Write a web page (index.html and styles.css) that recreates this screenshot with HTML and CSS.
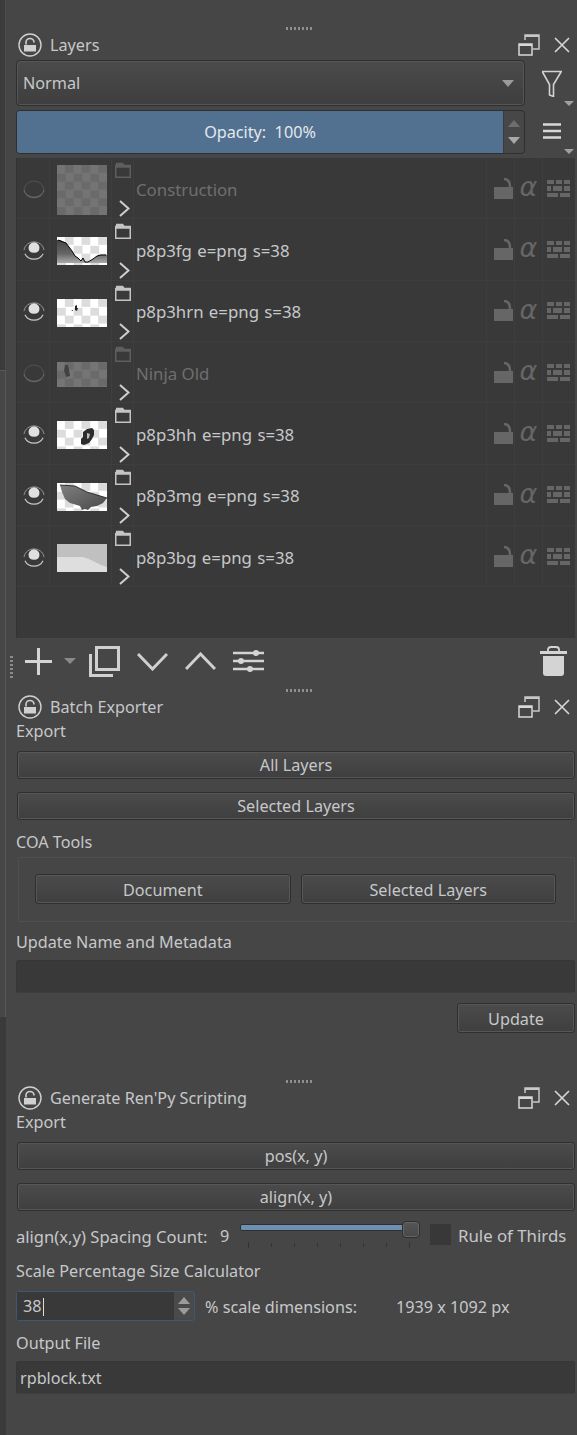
FILE: index.html
```html
<!DOCTYPE html>
<html lang="en">
<head>
    <meta charset="UTF-8">
    <title>Layers</title>
    <link rel="stylesheet" href="styles.css">
</head>
<body>
    <!-- shared icons -->
    <svg class="defs">
        <symbol id="i-dock-lock" viewBox="0 0 24 24">
            <circle cx="12" cy="12" r="11" fill="none" stroke="#d0d0d0" stroke-width="1.4"/>
            <rect x="6" y="12" width="12" height="6.5" fill="#d0d0d0"/>
            <path d="M8 11.5V9.5a4 4 0 0 1 8 0" fill="none" stroke="#d0d0d0" stroke-width="1.6"/>
        </symbol>
        <symbol id="i-float" viewBox="0 0 22 22">
            <path d="M7 6V1h14v14h-6" fill="none" stroke="#c8c8c8" stroke-width="1.5"/>
            <path d="M7 2h14" stroke="#c8c8c8" stroke-width="2"/>
            <rect x="1" y="10" width="13" height="11" fill="none" stroke="#d8d8d8" stroke-width="1.5"/>
            <path d="M1 11h13" stroke="#d8d8d8" stroke-width="2"/>
        </symbol>
        <symbol id="i-close" viewBox="0 0 16 16">
            <path d="M1 1l14 14M15 1L1 15" stroke="#d4d4d4" stroke-width="1.7"/>
        </symbol>
        <symbol id="i-eye" viewBox="0 0 24 22">
            <path d="M1 10C3-2 21-2 23 10" fill="none" stroke="#a0a0a0" stroke-width="1"/>
            <path d="M6 7.500a6 6 0 0 1 12 0q0 5.500-6 5.500t-6-5.500z" fill="#e0e0e0"/>
            <path d="M2 14c4 8 16 8 20 0" fill="none" stroke="#c8c8c8" stroke-width="1.300"/>
        </symbol>
        <symbol id="i-eye-off" viewBox="0 0 24 22">
            <path d="M1 11C3-2 21-2 23 11" fill="none" stroke="#565656" stroke-width="1"/>
            <path d="M1 11c2 11 20 11 22 0" fill="none" stroke="#666" stroke-width="1.400"/>
        </symbol>
        <symbol id="i-folder" viewBox="0 0 16 16">
            <path d="M.750 3.500h14.500v11.750H.750z" fill="none" stroke="currentColor" stroke-width="1.500"/>
            <path d="M1 .800h7l2 3h5v2H1z" fill="currentColor"/>
        </symbol>
        <symbol id="i-chevron" viewBox="0 0 11 17">
            <path d="M1 1l8.500 7.500L1 16" fill="none" stroke="#cfcfcf" stroke-width="2"/>
        </symbol>
        <symbol id="i-lock" viewBox="0 0 19 21">
            <rect x="0" y="9" width="19" height="12" fill="#666"/>
            <path d="M10 1c4 0 6 2 6 8" fill="none" stroke="#666" stroke-width="2.500"/>
        </symbol>
        <symbol id="i-bricks" viewBox="0 0 23 17">
            <path d="M0 0h7v4H0zM9 0h6v4H9zM17 0h6v4h-6zM0 6h4v5H0zM6 6h9v5H6zM17 6h6v5h-6zM0 13h11v4H0zM13 13h10v4H13z" fill="#666"/>
        </symbol>
    </svg>

    <div class="page">
        <div class="edge">
            <div class="edge-top"></div>
            <div class="edge-mid"></div>
        </div>

        <div class="docks">

            <!-- Layers -->
            <div class="handle handle-first"></div>
            <div class="dock-title">
                <svg class="title-lock"><use href="#i-dock-lock"/></svg>
                <span class="title-text">Layers</span>
                <svg class="title-float"><use href="#i-float"/></svg>
                <svg class="title-close"><use href="#i-close"/></svg>
            </div>

            <div class="tool-row combo-row">
                <div class="combo">
                    <span>Normal</span>
                    <i class="tri tri-down"></i>
                </div>
                <div class="tool-side">
                    <svg class="filter-icon" viewBox="0 0 22 27">
                        <path d="M1 1.500h20M1.500 2l7 12.500V25l4 1.500V14.500l7.500-12.500" fill="none" stroke="#d2d2d2" stroke-width="1.600"/>
                    </svg>
                    <i class="tri tri-small"></i>
                </div>
            </div>

            <div class="tool-row opacity-row">
                <div class="opacity">
                    <div class="opacity-fill">Opacity:&nbsp; 100%</div>
                    <div class="spin-arrows">
                        <i class="tri tri-up tri-dim"></i>
                        <i class="tri tri-down tri-bright"></i>
                    </div>
                </div>
                <div class="tool-side">
                    <svg class="menu-icon" viewBox="0 0 18 16">
                        <path d="M0 1.500h18M0 8h18M0 14.500h18" stroke="#d8d8d8" stroke-width="2.400"/>
                    </svg>
                    <i class="tri tri-small"></i>
                </div>
            </div>

            <div class="layer-list">
                <div class="layer layer-off">
                    <div class="cell"><svg class="eye"><use href="#i-eye-off"/></svg></div>
                    <div class="cell cell-thumb"><div class="thumb thumb-tall"></div></div>
                    <div class="cell cell-kind"><svg class="folder"><use href="#i-folder"/></svg><svg class="chevron"><use href="#i-chevron"/></svg></div>
                    <div class="cell cell-name">Construction</div>
                    <div class="cell"><svg class="lock"><use href="#i-lock"/></svg></div>
                    <div class="cell alpha">α</div>
                    <div class="cell cell-last"><svg class="bricks"><use href="#i-bricks"/></svg></div>
                </div>

                <div class="layer">
                    <div class="cell"><svg class="eye"><use href="#i-eye"/></svg></div>
                    <div class="cell cell-thumb">
                        <div class="thumb">
                            <svg class="thumb-art" viewBox="0 0 50 28">
                                <defs><linearGradient id="fg" x1="0" y1="0" x2="0" y2="1"><stop offset="0" stop-color="#444"/><stop offset=".6" stop-color="#666"/><stop offset="1" stop-color="#aaa"/></linearGradient></defs>
                                <path d="M0 3l3 0 6 3 6 8 3 5 3 2 3 3 2-3 2 4 3 0 5-3 4-3 4-1 6 0v8H0z" fill="url(#fg)"/>
                                <path d="M1 3l8 3 6 8 3 5 3 2 3 3 2-3 2 4 3 0 5-3 4-3 4-1 5 0" fill="none" stroke="#000" stroke-width="1"/>
                            </svg>
                        </div>
                    </div>
                    <div class="cell cell-kind"><svg class="folder"><use href="#i-folder"/></svg><svg class="chevron"><use href="#i-chevron"/></svg></div>
                    <div class="cell cell-name">p8p3fg e=png s=38</div>
                    <div class="cell"><svg class="lock"><use href="#i-lock"/></svg></div>
                    <div class="cell alpha">α</div>
                    <div class="cell cell-last"><svg class="bricks"><use href="#i-bricks"/></svg></div>
                </div>

                <div class="layer">
                    <div class="cell"><svg class="eye"><use href="#i-eye"/></svg></div>
                    <div class="cell cell-thumb">
                        <div class="thumb">
                            <svg class="thumb-art" viewBox="0 0 50 28">
                                <path d="M18 7l2-1 0 3 1 0-1 3-2-1zM14 12l2-1 0 1z" fill="#222"/>
                            </svg>
                        </div>
                    </div>
                    <div class="cell cell-kind"><svg class="folder"><use href="#i-folder"/></svg><svg class="chevron"><use href="#i-chevron"/></svg></div>
                    <div class="cell cell-name">p8p3hrn e=png s=38</div>
                    <div class="cell"><svg class="lock"><use href="#i-lock"/></svg></div>
                    <div class="cell alpha">α</div>
                    <div class="cell cell-last"><svg class="bricks"><use href="#i-bricks"/></svg></div>
                </div>

                <div class="layer layer-off">
                    <div class="cell"><svg class="eye"><use href="#i-eye-off"/></svg></div>
                    <div class="cell cell-thumb">
                        <div class="thumb thumb-short">
                            <svg class="thumb-art" viewBox="0 0 50 25">
                                <path d="M8 3h3l1 5 1 6-4 1-1-4-1-2z" fill="#555"/>
                            </svg>
                        </div>
                    </div>
                    <div class="cell cell-kind"><svg class="folder"><use href="#i-folder"/></svg><svg class="chevron"><use href="#i-chevron"/></svg></div>
                    <div class="cell cell-name">Ninja Old</div>
                    <div class="cell"><svg class="lock"><use href="#i-lock"/></svg></div>
                    <div class="cell alpha">α</div>
                    <div class="cell cell-last"><svg class="bricks"><use href="#i-bricks"/></svg></div>
                </div>

                <div class="layer">
                    <div class="cell"><svg class="eye"><use href="#i-eye"/></svg></div>
                    <div class="cell cell-thumb">
                        <div class="thumb">
                            <svg class="thumb-art" viewBox="0 0 50 28">
                                <path d="M26 11l4-3 5-1 2 2 0 5-2 4-3 4-5 2-3-1 0-5 2-2z" fill="#2c2c2c"/>
                                <path d="M30 12l3 1-1 4-2 1z" fill="#bbb"/>
                            </svg>
                        </div>
                    </div>
                    <div class="cell cell-kind"><svg class="folder"><use href="#i-folder"/></svg><svg class="chevron"><use href="#i-chevron"/></svg></div>
                    <div class="cell cell-name">p8p3hh e=png s=38</div>
                    <div class="cell"><svg class="lock"><use href="#i-lock"/></svg></div>
                    <div class="cell alpha">α</div>
                    <div class="cell cell-last"><svg class="bricks"><use href="#i-bricks"/></svg></div>
                </div>

                <div class="layer">
                    <div class="cell"><svg class="eye"><use href="#i-eye"/></svg></div>
                    <div class="cell cell-thumb">
                        <div class="thumb">
                            <svg class="thumb-art" viewBox="0 0 50 28">
                                <defs><linearGradient id="mg" x1="0" y1="0" x2="1" y2="1"><stop offset="0" stop-color="#808080"/><stop offset="1" stop-color="#484848"/></linearGradient></defs>
                                <path d="M3 2l15 1 12 6 10 3 10 3-4 5-6 3-6 1-3 3-3-1-3 1-2-4-10-3-5-4-3-7z" fill="url(#mg)"/>
                                <path d="M3 2l15 1 12 6 10 3 10 3" fill="none" stroke="#111" stroke-width=".8"/>
                            </svg>
                        </div>
                    </div>
                    <div class="cell cell-kind"><svg class="folder"><use href="#i-folder"/></svg><svg class="chevron"><use href="#i-chevron"/></svg></div>
                    <div class="cell cell-name">p8p3mg e=png s=38</div>
                    <div class="cell"><svg class="lock"><use href="#i-lock"/></svg></div>
                    <div class="cell alpha">α</div>
                    <div class="cell cell-last"><svg class="bricks"><use href="#i-bricks"/></svg></div>
                </div>

                <div class="layer">
                    <div class="cell"><svg class="eye"><use href="#i-eye"/></svg></div>
                    <div class="cell cell-thumb">
                        <div class="thumb thumb-bg">
                            <svg class="thumb-art" viewBox="0 0 50 28">
                                <path d="M0 0h50v23l-6-2-6-3-6-3-6-2-8 0-10 0-8 0z" fill="#c0c0c0"/>
                            </svg>
                        </div>
                    </div>
                    <div class="cell cell-kind"><svg class="folder"><use href="#i-folder"/></svg><svg class="chevron"><use href="#i-chevron"/></svg></div>
                    <div class="cell cell-name">p8p3bg e=png s=38</div>
                    <div class="cell"><svg class="lock"><use href="#i-lock"/></svg></div>
                    <div class="cell alpha">α</div>
                    <div class="cell cell-last"><svg class="bricks"><use href="#i-bricks"/></svg></div>
                </div>
            </div>

            <div class="layer-tools">
                <div class="grip"></div>
                <svg class="tb tb-plus" viewBox="0 0 27 27"><path d="M13.500 0v27M0 13.500h27" stroke="#d4d4d4" stroke-width="3"/></svg>
                <i class="tri tri-plus"></i>
                <svg class="tb tb-dup" viewBox="0 0 31 31">
                    <rect x="7.500" y="1.500" width="22" height="22" fill="none" stroke="#d0d0d0" stroke-width="3"/>
                    <path d="M1.500 8v21.500H24" fill="none" stroke="#d0d0d0" stroke-width="3"/>
                </svg>
                <svg class="tb tb-down" viewBox="0 0 31 19"><path d="M1 2l14.500 15L30 2" fill="none" stroke="#d0d0d0" stroke-width="3"/></svg>
                <svg class="tb tb-up" viewBox="0 0 31 19"><path d="M1 17L15.500 2 30 17" fill="none" stroke="#d0d0d0" stroke-width="3"/></svg>
                <svg class="tb tb-sliders" viewBox="0 0 31 22">
                    <path d="M0 3h31M0 11h31M0 19h31" stroke="#d4d4d4" stroke-width="2.600"/>
                    <circle cx="23" cy="3" r="3" fill="#d4d4d4"/>
                    <circle cx="8" cy="11" r="3" fill="#d4d4d4"/>
                    <circle cx="17" cy="19" r="3" fill="#d4d4d4"/>
                </svg>
                <svg class="tb tb-trash" viewBox="0 0 27 30">
                    <path d="M8 5V3.500Q8 1 11 1h5q3 0 3 2.500V5" fill="none" stroke="#d4d4d4" stroke-width="1.800"/>
                    <rect x="0" y="5" width="27" height="3" fill="#d4d4d4"/>
                    <path d="M3 10h21v17q0 3-3 3H6q-3 0-3-3z" fill="#d4d4d4"/>
                </svg>
            </div>

            <!-- Batch Exporter -->
            <div class="handle handle-second"></div>
            <div class="dock-title">
                <svg class="title-lock"><use href="#i-dock-lock"/></svg>
                <span class="title-text">Batch Exporter</span>
                <svg class="title-float"><use href="#i-float"/></svg>
                <svg class="title-close"><use href="#i-close"/></svg>
            </div>
            <div class="label">Export</div>
            <div class="btn btn-first">All Layers</div>
            <div class="btn btn-next">Selected Layers</div>
            <div class="label label-gap">COA Tools</div>
            <div class="group">
                <div class="btn btn-group">Document</div>
                <div class="btn btn-group">Selected Layers</div>
            </div>
            <div class="label label-after-group">Update Name and Metadata</div>
            <div class="input input-first"></div>
            <div class="update-row">
                <div class="btn btn-update">Update</div>
            </div>

            <!-- Generate Ren'Py Scripting -->
            <div class="handle handle-third"></div>
            <div class="dock-title">
                <svg class="title-lock"><use href="#i-dock-lock"/></svg>
                <span class="title-text">Generate Ren'Py Scripting</span>
                <svg class="title-float"><use href="#i-float"/></svg>
                <svg class="title-close"><use href="#i-close"/></svg>
            </div>
            <div class="label">Export</div>
            <div class="btn btn-first">pos(x, y)</div>
            <div class="btn btn-next">align(x, y)</div>

            <div class="slider-row">
                <span class="slider-label">align(x,y) Spacing Count:</span>
                <span class="slider-value">9</span>
                <div class="slider">
                    <div class="slider-track"></div>
                    <div class="slider-knob"></div>
                    <div class="slider-ticks">
                        <i class="tick tick-long"></i><i class="tick"></i><i class="tick"></i><i class="tick"></i>
                        <i class="tick"></i><i class="tick"></i><i class="tick"></i><i class="tick tick-long"></i>
                    </div>
                </div>
                <div class="checkbox"></div>
                <span class="check-label">Rule of Thirds</span>
            </div>

            <div class="label label-scale">Scale Percentage Size Calculator</div>
            <div class="spin-row">
                <div class="spinbox">
                    <div class="spin-text">38<span class="caret"></span></div>
                    <div class="spin-btns">
                        <i class="tri tri-up tri-spin"></i>
                        <i class="tri tri-down tri-spin"></i>
                    </div>
                </div>
                <span class="spin-label">% scale dimensions:</span>
                <span class="spin-result">1939 x 1092 px</span>
            </div>
            <div class="label label-gap">Output File</div>
            <div class="input input-first">rpblock.txt</div>
        </div>
    </div>
</body>
</html>
```

FILE: styles.css
```css
html{
    background: #464646;
}

body{
    margin: 0;
    width: 577px;
    height: 1435px;
    overflow: hidden;
    font-family: "Noto Sans", sans-serif;
    font-size: 16.2px;
    color: #c6c8ca;
}

.defs{
    display: none;
}

i{
    display: block;
}

.page{
    display: flex;
    height: 1435px;
}

.edge{
    width: 6px;
    background: #3a3a3a;
}

.edge-top{
    height: 370px;
    background: #3c3c3c;
    border-right: 1px solid #4c4c4c;
}

.edge-mid{
    height: 646px;
    background: #474747;
    border-top: 1px solid #585858;
    border-right: 1px solid #585858;
}

.docks{
    margin-left: 10px;
    width: 559px;
}

/* dock headers */

.handle{
    width: 26px;
    height: 3px;
    margin-left: 270px;
    background: repeating-linear-gradient(90deg, #8f8f8f 0 2px, transparent 2px 4px);
}

.handle-first{
    margin-top: 27px;
}

.handle-second{
    margin-top: 9px;
}

.handle-third{
    margin-top: 47px;
}

.dock-title{
    display: flex;
    align-items: center;
    height: 24px;
    margin-top: 3px;
}

.title-lock{
    width: 24px;
    height: 24px;
    margin-left: 2px;
}

.title-text{
    margin-left: 8px;
    flex: 1;
}

.title-float{
    width: 22px;
    height: 22px;
}

.title-close{
    width: 16px;
    height: 16px;
    margin-left: 14px;
    margin-right: 5px;
}

/* triangles */

.tri{
    width: 0;
    height: 0;
    border-left: 6px solid transparent;
    border-right: 6px solid transparent;
}

.tri-down{
    border-top: 7px solid #9b9b9b;
}

.tri-up{
    border-bottom: 7px solid #9b9b9b;
}

.tri-dim{
    border-bottom-color: #6e6e6e;
}

.tri-bright{
    border-top-color: #a8a8a8;
}

.tri-small{
    position: absolute;
    right: 1px;
    bottom: 0;
    border-left-width: 5px;
    border-right-width: 5px;
    border-top: 5px solid #a0a0a0;
}

.tri-plus{
    margin-left: 12px;
    border-top: 6px solid #8a8a8a;
}

.tri-spin{
    border-left-width: 6px;
    border-right-width: 6px;
}

/* blend mode and opacity */

.tool-row{
    display: flex;
}

.combo-row{
    height: 46px;
    margin-top: 3px;
}

.opacity-row{
    height: 44px;
    margin-top: 4px;
}

.combo{
    display: flex;
    align-items: center;
    justify-content: space-between;
    flex: 1;
    padding: 0 10px 0 6px;
    border: 1px solid #2f2f2f;
    border-radius: 4px;
    box-shadow: inset 0 0 0 1px #565656;
    background: linear-gradient(#4b4b4b, #3e3e3e);
}

.tool-side{
    position: relative;
    display: flex;
    align-items: center;
    justify-content: center;
    width: 50px;
}

.filter-icon{
    width: 22px;
    height: 27px;
    margin-left: 4px;
}

.menu-icon{
    width: 18px;
    height: 16px;
    margin-top: -2px;
    margin-left: 4px;
}

.opacity{
    display: flex;
    flex: 1;
    border: 1px solid #2f2f2f;
    border-radius: 4px;
    overflow: hidden;
    background: #474747;
}

.opacity-fill{
    flex: 1;
    padding-top: 1px;
    line-height: 41px;
    text-align: center;
    background: #527190;
    color: #e4e8ec;
    border-right: 1px solid #3b3b3b;
}

.spin-arrows{
    display: flex;
    flex-direction: column;
    align-items: center;
    justify-content: center;
    gap: 10px;
    width: 20px;
}

/* layer list */

.layer-list{
    height: 480px;
    margin-top: 4px;
    margin-left: 1px;
    background: #393939;
    box-shadow: -1px 0 0 #333;
}

.layer{
    display: grid;
    grid-template-columns: 33px 62px 22px 353px 28px 28px 32px;
    height: 61.33px;
    border-bottom: 1px solid #3e3e3e;
    box-sizing: border-box;
}

.cell{
    display: flex;
    align-items: center;
    justify-content: center;
    border-right: 1px solid #3e3e3e;
}

.cell-last{
    border-right: none;
    padding-right: 2px;
}

.cell-kind{
    flex-direction: column;
    justify-content: space-between;
    padding: 4px 0 1px 1px;
    color: #c4c4c4;
}

.cell-thumb{
    padding-top: 4px;
    padding-left: 2px;
}

.cell-name{
    justify-content: flex-start;
    padding: 2px 0 0 2px;
    font-size: 16.8px;
    word-spacing: 1px;
}

.layer-off .cell-name{
    color: #6f6f6f;
    word-spacing: 0;
}

.layer-off .cell-kind{
    color: #5e5e5e;
}

.layer-off .thumb{
    opacity: .3;
}

.eye{
    width: 22px;
    height: 20px;
    margin-top: 3px;
    margin-left: 1px;
}

.folder{
    width: 16px;
    height: 16px;
}

.chevron{
    width: 11px;
    height: 17px;
    margin-left: 2px;
}

.lock{
    width: 19px;
    height: 21px;
    margin-left: 5px;
}

.bricks{
    width: 23px;
    height: 17px;
}

.alpha{
    padding-bottom: 3px;
    font-family: "DejaVu Sans", sans-serif;
    font-style: italic;
    font-size: 27px;
    color: #666;
}

.thumb{
    width: 50px;
    height: 28px;
    background: conic-gradient(#dcdcdc 25%, #fff 0 50%, #dcdcdc 0 75%, #fff 0) 0 0 / 16.67px 16.67px;
}

.thumb-tall{
    height: 50px;
}

.thumb-short{
    height: 25px;
}

.thumb-bg{
    background: #dedede;
}

.thumb-art{
    display: block;
    width: 100%;
    height: 100%;
}

/* layer toolbar */

.layer-tools{
    position: relative;
    display: flex;
    align-items: center;
    height: 42px;
    box-sizing: border-box;
    padding-top: 4px;
}

.grip{
    position: absolute;
    left: -6px;
    top: 18px;
    width: 3px;
    height: 24px;
    background: repeating-linear-gradient(#8a8a8a 0 2px, transparent 2px 4px);
}

.tb{
    flex: none;
}

.tb-plus{
    width: 27px;
    height: 27px;
    margin-left: 9px;
}

.tb-dup{
    width: 31px;
    height: 31px;
    margin-left: 13px;
}

.tb-down{
    width: 31px;
    height: 19px;
    margin-left: 17px;
}

.tb-up{
    width: 31px;
    height: 19px;
    margin-left: 17px;
}

.tb-sliders{
    width: 31px;
    height: 22px;
    margin-left: 17px;
}

.tb-trash{
    width: 27px;
    height: 30px;
    margin-left: auto;
    margin-right: 8px;
}

/* form parts */

.label{
    height: 24px;
    line-height: 25px;
}

.label-gap{
    margin-top: 10px;
}

.label-after-group{
    margin-top: 8px;
}

.label-scale{
    margin-top: 9px;
}

.btn{
    display: flex;
    align-items: center;
    justify-content: center;
    height: 28px;
    box-sizing: border-box;
    border: 1px solid #2f2f2f;
    border-radius: 3px;
    box-shadow: inset 0 0 0 1px #565656;
    background: linear-gradient(#4b4b4b, #3f3f3f);
}

.btn-first{
    margin-top: 8px;
    margin-left: 1px;
}

.btn-next{
    margin-top: 13px;
    margin-left: 1px;
}

.group{
    display: flex;
    gap: 10px;
    height: 65px;
    box-sizing: border-box;
    margin-top: 3px;
    margin-left: 2px;
    padding: 16px 18px 0 16px;
    border: 1px solid #4f4f4f;
    border-radius: 2px;
}

.btn-group{
    flex: 1;
    height: 30px;
    padding-top: 2px;
}

.input{
    height: 33px;
    box-sizing: border-box;
    padding-left: 3px;
    line-height: 33px;
    background: #393939;
    border: 1px solid #363636;
    border-bottom-color: #3e3e3e;
    border-radius: 3px;
}

.input-first{
    margin-top: 6px;
}

.update-row{
    display: flex;
    justify-content: flex-end;
    margin-top: 10px;
}

.btn-update{
    width: 118px;
    height: 30px;
    padding-top: 2px;
}

/* slider row */

.slider-row{
    display: flex;
    align-items: center;
    height: 28px;
    margin-top: 11px;
}

.slider-label{
    width: 204px;
    font-size: 16.6px;
    white-space: nowrap;
}

.slider-value{
    width: 20px;
}

.slider{
    position: relative;
    width: 180px;
    height: 28px;
}

.slider-track{
    position: absolute;
    left: 0;
    top: 2px;
    width: 165px;
    height: 5px;
    background: #6d90b2;
    border: 1px solid #2f2f2f;
    border-radius: 2px;
}

.slider-knob{
    position: absolute;
    left: 162px;
    top: -1px;
    width: 16px;
    height: 15px;
    background: linear-gradient(#565656, #484848);
    border: 1px solid #2f2f2f;
    border-radius: 4px;
    box-shadow: inset 0 0 0 1px #666;
}

.slider-ticks{
    position: absolute;
    left: 8px;
    right: 10px;
    top: 21px;
    display: flex;
    justify-content: space-between;
}

.tick{
    width: 1px;
    height: 4px;
    background: #333;
}

.tick-long{
    height: 6px;
    margin-top: -1px;
}

.checkbox{
    width: 21px;
    height: 21px;
    margin-left: 10px;
    margin-top: -3px;
    background: #383838;
}

.check-label{
    margin-left: 7px;
    margin-top: -2px;
    font-size: 16.8px;
    white-space: nowrap;
}

/* spin box row */

.spin-row{
    display: flex;
    align-items: center;
    margin-top: 8px;
    height: 30px;
}

.spinbox{
    display: flex;
    width: 179px;
    height: 30px;
    box-sizing: border-box;
    border: 1px solid #3c5872;
    border-radius: 3px;
    background: #4a4a4a;
}

.spin-text{
    flex: 1;
    padding-left: 6px;
    line-height: 28px;
    background: #393939;
}

.caret{
    display: inline-block;
    width: 1px;
    height: 18px;
    margin-left: 1px;
    vertical-align: -4px;
    background: #ddd;
}

.spin-btns{
    display: flex;
    flex-direction: column;
    align-items: center;
    justify-content: center;
    gap: 4px;
    width: 20px;
}

.spin-label{
    width: 191px;
    margin-left: 10px;
    padding-top: 2px;
}

.spin-result{
    padding-top: 2px;
    white-space: nowrap;
}
```
